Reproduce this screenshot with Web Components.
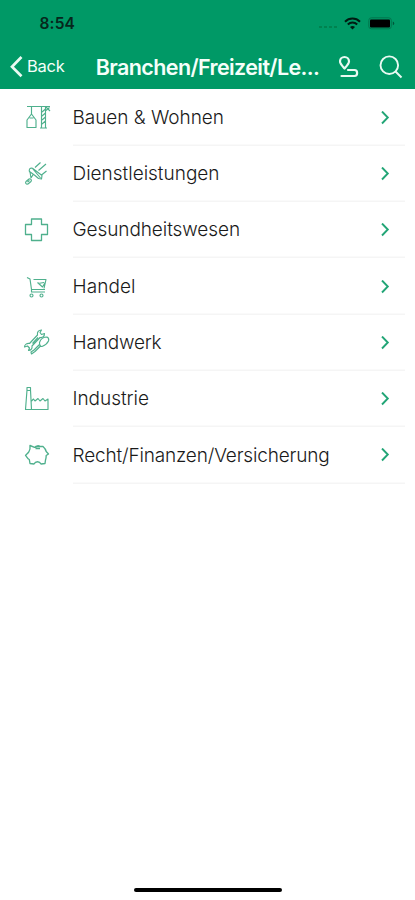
<!DOCTYPE html>
<html lang="de">
<head>
<meta charset="utf-8">
<title>Branchen</title>
<style>
html,body{margin:0;height:100%;background:#fff}
body{font-family:Inter,"Liberation Sans",sans-serif;overflow:hidden}
</style>
</head>
<body>
<phone-screen>
  <status-bar slot="top" time="8:54"></status-bar>
  <nav-bar slot="top"><fit-text slot="back" width="36.5">Back</fit-text><fit-text slot="title" width="222.5">Branchen/Freizeit/Le...</fit-text></nav-bar>
  <list-row icon="crane"><fit-text width="150.5">Bauen &amp; Wohnen</fit-text></list-row>
  <list-row icon="brush"><fit-text width="146">Dienstleistungen</fit-text></list-row>
  <list-row icon="cross"><fit-text width="166.5">Gesundheitswesen</fit-text></list-row>
  <list-row icon="cart"><fit-text width="62">Handel</fit-text></list-row>
  <list-row icon="tools"><fit-text width="88">Handwerk</fit-text></list-row>
  <list-row icon="factory"><fit-text width="75.5">Industrie</fit-text></list-row>
  <list-row icon="piggy"><fit-text width="256">Recht/Finanzen/Versicherung</fit-text></list-row>
</phone-screen>
<script>
const ICONS = {
  crane: '<path d="M7 5.500H30M11.500 5.500V13M11.500 13L7 19v7.500h9V19l-4.500-6M9.500 17h4M21.500 6v20.500M25.500 6v20.500M20 27h7M22 11l3.500-3M22 15l3.500-3M22 19l3.500-3M22 23l3.500-3M26 6l4 4M26 9.500l3.500-3"/>',
  brush: '<path d="M15 10.500l5.500-5M18.500 13.500L26 7M21.500 18l5-4M9.500 15c-1-3 1-4.500 3-3.700L22 18.500l-.500 3.500-3-.500-3.500-3-5.500-4M12.500 11.500l8 9.500M10 15l1 6M13.500 17l-2.500 4"/><path d="M6 24.500l3-2.500c2-.5 3 1 2 2.500l-3 2.500c-2 .5-3-1-2-2.500zM7.500 25l2-1.500"/>',
  cross: '<path stroke-width="1.300" d="M11.500 6h10v5.500h6v10h-6v6h-10v-6h-6v-10h6z"/>',
  cart: '<path d="M7 7.500l3 1.500 1.500 10.500H25M13.500 9.500H26l-2 9M17.500 12.500l5 4.500 3-5M18 13.500l6-1M11.500 19.500v2.500H25"/><circle cx="11.500" cy="25.500" r="1.500"/><circle cx="21.500" cy="25.500" r="1.500"/>',
  tools: '<path d="M21.500 4c-3 0-4.500 2-4 5l-8 8.500c-2.500-.5-5 1-5 3.500l3-1 2 2-1 2.500c2.500 0 4-2 3.500-4.500l8-8.500c3 .5 4.500-1.500 4.500-4l-3 1-1.500-2zM12.500 17.500l5.500-6"/><path d="M19.500 16.500c1-3 4-5.500 7.500-5.500 2 1 2 2.500 1.500 4-1.500 3-3.500 4.500-6.500 5.500-1.500 0-2.500-2-2.500-4zM20.500 20L15 25.500l-3.500 2.500-.5-2 3-2 5.500-5.500"/>',
  factory: '<path d="M5.500 27.500L7 8V5.500h3.500V8l1 19.500M5 27.500h23V17l-3 2-2-2.500-3 2.500-2-2.500-3 2.500-1.500-2-2.500 2.500M7 8.500h3.500"/>',
  piggy: '<path stroke-width="1.350" d="M10 7.500l4.500 1.800 3.500-1 5 .2c1.700 1.500 2.700 3 3.200 5l2.300 2.500-2.300 1.500c0 2-.2 3-.7 4.500l-.5 3.500-4 .5c-1.500-3-5.500-3-7 0l-4-.500-.7-4c-2-1-2.500-3-3.800-4 1-1.500 3-2.500 3.500-4 1-1.500 1.300-3.500 1-6zM15 9c1-1.500 4-1.500 5-.5M15.500 10.500h4.500"/>'
};

function define(name, markup, setup) {
  const template = document.createElement('template');
  template.innerHTML = markup;
  customElements.define(name, class extends HTMLElement {
    connectedCallback() {
      if (this.shadowRoot) return;
      this.attachShadow({mode: 'open'}).append(template.content.cloneNode(true));
      if (setup) setup(this, this.shadowRoot);
    }
  });
}

define('phone-screen', `<style>
:host{display:flex;flex-direction:column;height:900px;width:415px;background:#fff}
header{background:#009966;height:88.500px;flex:none;display:flex;flex-direction:column}
main{flex:1;padding-top:1px}
footer{height:12.500px;flex:none;display:flex;justify-content:center}
footer i{width:148px;height:4.500px;border-radius:2px;background:#000}
</style><header><slot name="top"></slot></header><main><slot></slot></main><footer><i></i></footer>`);

define('status-bar', `<style>
:host{display:flex;height:46px;flex:none;align-items:center;padding:1px 20px 0 40px;box-sizing:border-box;color:#06271c}
fit-text{font-size:15.500px;font-weight:600;flex:1}
.dots{margin:7px 7px 0 0}
.wifi{margin-right:7px}
svg{display:block;flex:none}
</style><fit-text width="34.5"></fit-text>
<svg class="dots" width="18" height="4" fill="#00824f"><rect x="0" y="1" width="3" height="2"/><rect x="5" y="1" width="3" height="2"/><rect x="10" y="1" width="3" height="2"/><rect x="15" y="1" width="3" height="2"/></svg>
<svg class="wifi" width="17" height="13" viewBox="0 0 17 13" fill="none" stroke="#001b12" stroke-width="2"><path d="M1 4.700c4.200-4.200 10.800-4.200 15 0M3.800 7.500c2.700-2.600 6.700-2.600 9.400 0"/><path d="M6 10c1.500-1.300 3.500-1.300 5 0L8.500 12.500z" fill="#001b12" stroke="none"/></svg>
<svg width="27" height="13" viewBox="0 0 27 13"><rect x=".8" y=".8" width="22.500" height="11" rx="2.500" fill="none" stroke="#00764e"/><rect x="2" y="2.500" width="20" height="8" rx="1" fill="#000"/><path d="M24.800 4.500c2 .8 2 3 0 3.800z" fill="#00553a"/></svg>`,
(host, root) => root.querySelector('fit-text').textContent = host.getAttribute('time'));

define('nav-bar', `<style>
:host{display:flex;height:42.500px;align-items:center;color:#f5fffa;box-sizing:border-box;padding:0 12px 0 9px}
svg{display:block;flex:none;fill:none;stroke:#e9faf2}
.back{font-size:16.500px;margin-left:4.500px;width:69px;margin-top:-1px}
.title{font-size:21.500px;font-weight:600;width:243.500px}
</style>
<svg width="14" height="24" viewBox="0 0 14 24" stroke-width="2.700"><path d="M12.500 2L3 11.700l9.500 9.600"/></svg>
<div class="back"><slot name="back"></slot></div>
<div class="title"><slot name="title"></slot></div>
<svg width="20" height="24" viewBox="0 0 20 24" stroke-width="2.200" stroke-linecap="round" stroke-linejoin="round"><path d="M5.500 13.500C2 9.500 1 8.500 1 6.500a4.500 4.500 0 0 1 9 0c0 2-1 3-4.500 7zM9 15h6.500c3.500 0 3.500 6 0 6H2.500"/></svg>
<svg width="24" height="24" viewBox="0 0 24 24" stroke-width="1.900" style="margin-left:20px"><circle cx="10.300" cy="10.200" r="8.800"/><path d="M16.500 16.500l6 6"/></svg>`);

define('list-row', `<style>
:host{display:flex;height:56.300px;align-items:stretch;padding-right:10px;color:#1a1a1a}
.icon{width:73px;display:flex;align-items:center;flex:none}
.icon svg{margin-left:20px;fill:none;stroke:#4fb08d;stroke-width:1.150;stroke-linejoin:round}
.body{flex:1;display:flex;align-items:center;justify-content:space-between;font-size:19px;font-weight:350;padding-right:14px;box-shadow:inset 0 -1.500px #f5f5f5}
.body>svg{fill:none;stroke:#22a576;stroke-width:1.900}
</style>
<div class="icon"><svg width="34" height="34" viewBox="0 0 34 34"></svg></div>
<div class="body"><slot></slot><svg width="11" height="14" viewBox="0 0 11 14"><path d="M2 .5l5.800 6L2 12.500"/></svg></div>`,
(host, root) => root.querySelector('.icon svg').innerHTML = ICONS[host.getAttribute('icon')]);

// A single line of text, tracked so that it fills the given width.
define('fit-text', `<style>:host{display:block;white-space:nowrap}span{display:inline-block;line-height:1.200}</style><span><slot></slot></span>`,
(host, root) => {
  const span = root.querySelector('span');
  requestAnimationFrame(() => {
    const gap = +host.getAttribute('width') + 1 - span.getBoundingClientRect().width;
    span.style.letterSpacing = gap / host.textContent.length + 'px';
    span.style.marginLeft = '-.5px';
  });
});
</script>
</body>
</html>
